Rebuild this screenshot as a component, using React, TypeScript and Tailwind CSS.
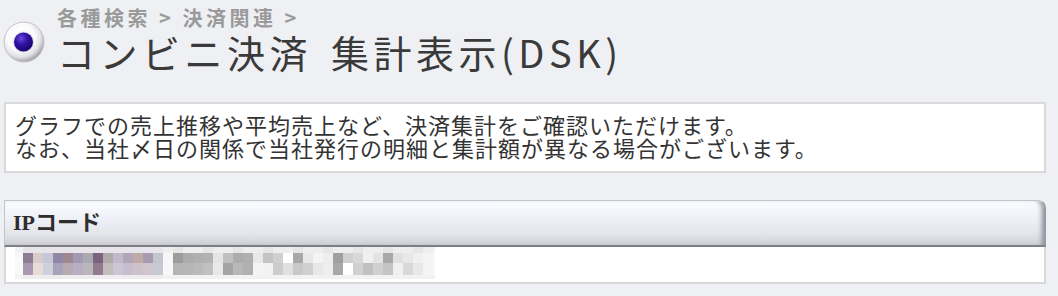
import React from "react";

const rowA = [
  "#8c7c94", "#d8ccca", "#c6c6d6", "#8e88a6", "#a08890", "#a29ab2", "#a8aab0", "#7a6280", "#b0aaa8", "#c0bacc", "#b0a6b8", "#c0aaa8", "#a89ab2", "#c2c6ce",
  "#f6f6f6",
  "#9c9c9c", "#acacac", "#b0b0b0", "#b2b2b2", "#e4e4e4", "#c0c0c0", "#acacac", "#b0b0b0", "#e8e8e8", "#c4c4c4", "#d0d0d0", "#ffffff", "#a8a8a8", "#e8e8e8", "#f4f4f4", "#eeeeee", "#a0a0a0", "#d0d0d0", "#d8d8d8", "#f0f0f0", "#e4e4e4", "#a8a8a8", "#e0e0e0", "#e8e8e8", "#f0f0f0", "#f4f4f4",
];
const rowB = [
  "#a898b2", "#e8dcd8", "#d0d0dc", "#a8a2ba", "#b8aab2", "#b8b0c2", "#b8b8bc", "#927a8c", "#c2bebb", "#cac6d6", "#c6bece", "#cec2ca", "#d2c6ce", "#c6cad2",
  "#f8f8f8",
  "#b4b4b4", "#b6b6b6", "#bababa", "#c0c0c0", "#e8e8e8", "#a4a4a4", "#b8b8b8", "#b0b0b0", "#f4f4f4", "#f2f2f2", "#cccccc", "#e0e0e0", "#c8c8c8", "#d0d0d0", "#e8e8e8", "#eeeeee", "#a8a8a8", "#ffffff", "#d0d0d0", "#c0c0c0", "#d0d0d0", "#c4c4c4", "#f0f0f0", "#d8d8d8", "#e8e8e8", "#f4f4f4",
];

function Mosaic() {
  const band = (key: string, h: string, tint: (i: number) => string) => (
    <div key={key} className={`flex ${h}`}>
      <div className="w-[8px] bg-[#f2f2f2]" />
      {rowA.map((_, i) => (
        <div key={i} className="w-[10px]" style={{ backgroundColor: tint(i) }} />
      ))}
      <div className="w-[2px] bg-[#f2f2f2]" />
    </div>
  );
  return (
    <div className="flex flex-col w-[420px]">
      {band("t", "h-[6px]", (i) => (i < 14 ? "#e8e5ea" : i % 3 === 0 ? "#e6e6e6" : "#eeeeee"))}
      <div className="flex h-[10px]">
        <div className="w-[8px] bg-[#f8f8f8]" />
        {rowA.map((c, i) => (
          <div key={i} className="w-[10px]" style={{ backgroundColor: c }} />
        ))}
        <div className="w-[2px] bg-[#f8f8f8]" />
      </div>
      <div className="flex h-[12px]">
        <div className="w-[8px] bg-[#f8f8f8]" />
        {rowB.map((c, i) => (
          <div key={i} className="w-[10px]" style={{ backgroundColor: c }} />
        ))}
        <div className="w-[2px] bg-[#f8f8f8]" />
      </div>
      {band("b", "h-[4px]", (i) => (i < 14 ? "#eeecef" : "#f2f2f2"))}
    </div>
  );
}

function RadioIcon() {
  return (
    <svg width="42" height="42" viewBox="0 0 42 42">
      <defs>
        <radialGradient id="outerG" cx="42%" cy="38%" r="62%">
          <stop offset="0%" stopColor="#ffffff" />
          <stop offset="55%" stopColor="#fbfbfb" />
          <stop offset="80%" stopColor="#e2e2e4" />
          <stop offset="100%" stopColor="#a4a4a8" />
        </radialGradient>
        <radialGradient id="innerG" cx="38%" cy="32%" r="70%">
          <stop offset="0%" stopColor="#6a4ad8" />
          <stop offset="45%" stopColor="#3312a8" />
          <stop offset="100%" stopColor="#1a0668" />
        </radialGradient>
      </defs>
      <circle cx="21" cy="21" r="20" fill="url(#outerG)" stroke="#c4c4c8" strokeWidth="1" />
      <circle cx="20.5" cy="21" r="10.5" fill="#c9c2e6" opacity="0.6" />
      <circle cx="20.5" cy="21" r="9.5" fill="url(#innerG)" />
    </svg>
  );
}

export default function App() {
  const jp = { fontFamily: '"Noto Sans CJK JP", "Noto Sans", sans-serif' };
  return (
    <div className="w-[1058px] h-[296px] overflow-hidden bg-[#eff0f4]" style={jp}>
      <div className="flex items-start pt-[7px]">
        <div className="ml-[3px] mt-[14px] shrink-0">
          <RadioIcon />
        </div>
        <div className="ml-[12px] flex flex-col">
          <div className="text-[20px] leading-[21px] font-bold tracking-[3.5px] text-[#9a9a9a]">
            各種検索 &gt; 決済関連 &gt;
          </div>
          <div className="mt-[1px] text-[38px] leading-[46px] tracking-[4.5px] text-[#3a3a3a] [word-spacing:6px]">
            コンビニ決済 集計表示(DSK)
          </div>
        </div>
      </div>

      <div className="ml-[4px] w-[1042px] mt-[27px] h-[71px] bg-white border-2 border-[#dadada] pl-[9px] pt-[9px] text-[22px] leading-[23px] tracking-[1px] text-[#333333]">
        <div>グラフでの売上推移や平均売上など、決済集計をご確認いただけます。</div>
        <div>なお、当社〆日の関係で当社発行の明細と集計額が異なる場合がございます。</div>
      </div>

      <div className="ml-[4px] w-[1042px] mt-[27px]">
        <div className="h-[47px] flex items-center pl-[8px] rounded-tr-[8px] border-t border-l border-[#c4c4cc] border-r-2 border-r-[#9a9aa2] border-b-2 border-b-[#7e7e86] bg-[linear-gradient(to_bottom,#fbfcff_0%,#f0f2f9_35%,#e4e5eb_75%,#cfd0d6_100%)] shadow-[inset_-5px_0_5px_-3px_#8a8a92]">
          <span
            className="text-[22px] leading-[24px] font-bold text-[#2e2e2e]"
            style={{ fontFamily: '"Liberation Serif", "Noto Sans CJK JP", serif' }}
          >
            IPコード
          </span>
        </div>
        <div className="h-[37px] bg-white border-x-2 border-b-2 border-[#d8d8d8] pl-[9px] pt-[0px]">
          <Mosaic />
        </div>
      </div>
    </div>
  );
}
